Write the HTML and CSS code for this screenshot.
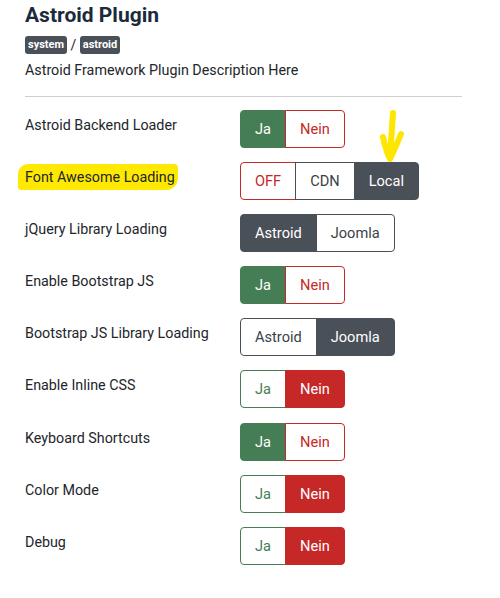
FILE: index.html
```html
<!DOCTYPE html>
<html lang="en">
<head>
    <meta charset="UTF-8">
    <meta name="viewport" content="width=device-width, initial-scale=1.0">
    <title>Astroid Plugin</title>
    <link rel="stylesheet" href="styles.css">
</head>
<body>
    <div class="plugin">
        <h1 class="plugin-title">Astroid Plugin</h1>
        <div class="plugin-meta">
            <span class="badge">system</span> / <span class="badge">astroid</span>
        </div>
        <p class="plugin-desc">Astroid Framework Plugin Description Here</p>
        <hr class="divider">

        <div class="options">
            <div class="control-group">
                <label class="control-label">Astroid Backend Loader</label>
                <div class="btn-group">
                    <button class="btn btn-success">Ja</button>
                    <button class="btn btn-outline-danger">Nein</button>
                </div>
            </div>

            <div class="control-group">
                <label class="control-label"><span class="marker">Font Awesome Loading</span></label>
                <div class="btn-group">
                    <button class="btn btn-outline-danger">OFF</button>
                    <button class="btn btn-outline-dark">CDN</button>
                    <button class="btn btn-dark">Local</button>
                </div>
                <!-- стрелка-подсказка -->
                <svg class="arrow" width="40" height="56" viewBox="0 0 40 56">
                    <path d="M25 3 C24 18 23 32 22 48 M15 27 C17 36 19 43 22 49 C26 41 29 34 33 24" fill="none" stroke="#ffe600" stroke-width="6" stroke-linecap="round" stroke-linejoin="round"/>
                </svg>
            </div>

            <div class="control-group">
                <label class="control-label">jQuery Library Loading</label>
                <div class="btn-group">
                    <button class="btn btn-dark">Astroid</button>
                    <button class="btn btn-outline-dark">Joomla</button>
                </div>
            </div>

            <div class="control-group">
                <label class="control-label">Enable Bootstrap JS</label>
                <div class="btn-group">
                    <button class="btn btn-success">Ja</button>
                    <button class="btn btn-outline-danger">Nein</button>
                </div>
            </div>

            <div class="control-group">
                <label class="control-label">Bootstrap JS Library Loading</label>
                <div class="btn-group">
                    <button class="btn btn-outline-dark">Astroid</button>
                    <button class="btn btn-dark">Joomla</button>
                </div>
            </div>

            <div class="control-group">
                <label class="control-label">Enable Inline CSS</label>
                <div class="btn-group">
                    <button class="btn btn-outline-success">Ja</button>
                    <button class="btn btn-danger">Nein</button>
                </div>
            </div>

            <div class="control-group">
                <label class="control-label">Keyboard Shortcuts</label>
                <div class="btn-group">
                    <button class="btn btn-success">Ja</button>
                    <button class="btn btn-outline-danger">Nein</button>
                </div>
            </div>

            <div class="control-group">
                <label class="control-label">Color Mode</label>
                <div class="btn-group">
                    <button class="btn btn-outline-success">Ja</button>
                    <button class="btn btn-danger">Nein</button>
                </div>
            </div>

            <div class="control-group">
                <label class="control-label">Debug</label>
                <div class="btn-group">
                    <button class="btn btn-outline-success">Ja</button>
                    <button class="btn btn-danger">Nein</button>
                </div>
            </div>
        </div>
    </div>
</body>
</html>
```

FILE: styles.css
```css
body {
    margin: 0;
    background: #fff;
    color: #22262a;
    font-family: Roboto, "Liberation Sans", sans-serif;
}

.plugin {
    padding: 0 38px 0 25px;
}

.plugin-title {
    margin: 0;
    padding-top: 2px;
    font-size: 21px;
    line-height: 26px;
    font-weight: 700;
    color: #1c2a3d;
}

.plugin-meta {
    margin-top: 8px;
    font-size: 14px;
    line-height: 18px;
}

.badge {
    display: inline-block;
    padding: 0 3px;
    border-radius: 3px;
    background: #4a5058;
    color: #fff;
    font-size: 11px;
    font-weight: 700;
    line-height: 18px;
    vertical-align: top;
}

.plugin-desc {
    margin: 6px 0 0;
    font-size: 14.3px;
    line-height: 20px;
}

.divider {
    margin: 16px 0 13px;
    border: 0;
    border-top: 1px solid #cfcfcf;
}

/* строки настроек */
.control-group {
    position: relative;
    display: flex;
    margin-bottom: 14.1px;
}

.control-label {
    width: 215px;
    flex-shrink: 0;
    padding-top: 6px;
    font-size: 14.3px;
    line-height: 18px;
}

.marker {
    display: inline-block;
    margin: -4px 0 0 -7px;
    padding: 4px 3px 4px 7px;
    background: #ffe900;
    border-radius: 10px 4px 12px 3px;
}

.btn-group {
    display: flex;
}

.btn {
    height: 38px;
    padding: 0 14px;
    border: 1px solid;
    background: #fff;
    font-family: inherit;
    font-size: 14.6px;
    margin: 0;
}

.btn + .btn {
    margin-left: -1px;
}

.btn:first-child {
    border-radius: 4px 0 0 4px;
}

.btn:last-child {
    border-radius: 0 4px 4px 0;
}

.btn-success {
    background: #457d54;
    border-color: #457d54;
    color: #fff;
}

.btn-outline-success {
    border-color: #457d54;
    color: #457d54;
}

.btn-danger {
    background: #c52827;
    border-color: #c52827;
    color: #fff;
}

.btn-outline-danger {
    border-color: #c52827;
    color: #c52827;
}

.btn-dark {
    background: #4a5058;
    border-color: #4a5058;
    color: #fff;
}

.btn-outline-dark {
    border-color: #4a5058;
    color: #3b4148;
}

.arrow {
    position: absolute;
    left: 343px;
    top: -52px;
}
```
